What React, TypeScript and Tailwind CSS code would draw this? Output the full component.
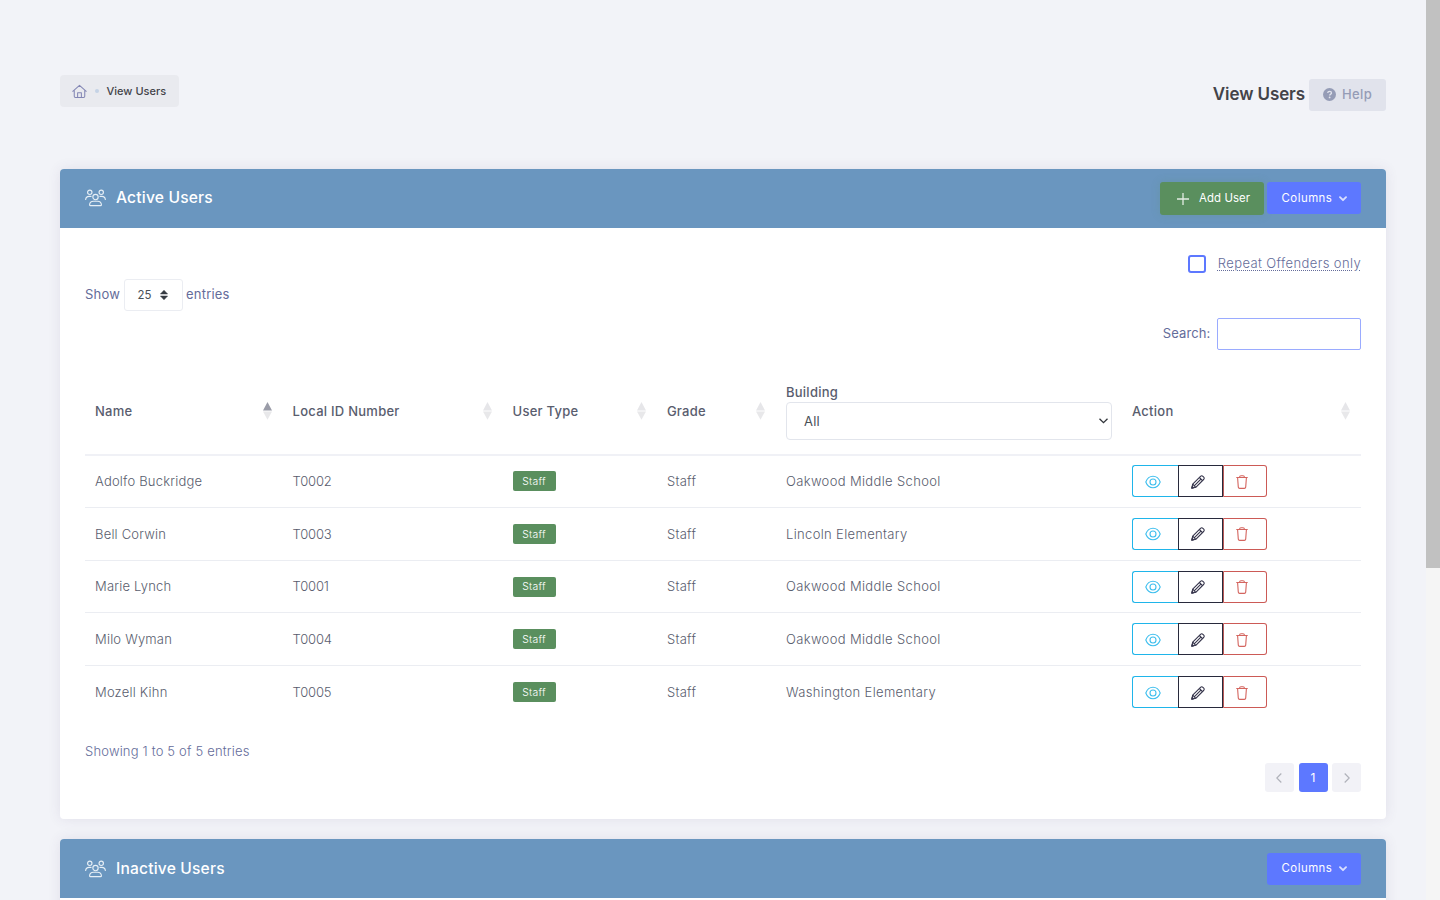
import type { ReactNode } from 'react';

interface User {
  name: string;
  localId: string;
  type: string;
  grade: string;
  building: string;
}

const users: User[] = [
  { name: 'Adolfo Buckridge', localId: 'T0002', type: 'Staff', grade: 'Staff', building: 'Oakwood Middle School' },
  { name: 'Bell Corwin', localId: 'T0003', type: 'Staff', grade: 'Staff', building: 'Lincoln Elementary' },
  { name: 'Marie Lynch', localId: 'T0001', type: 'Staff', grade: 'Staff', building: 'Oakwood Middle School' },
  { name: 'Milo Wyman', localId: 'T0004', type: 'Staff', grade: 'Staff', building: 'Oakwood Middle School' },
  { name: 'Mozell Kihn', localId: 'T0005', type: 'Staff', grade: 'Staff', building: 'Washington Elementary' },
];

const columns = 'grid grid-cols-[197.6px_220px_154.3px_119.1px_346px_239px]';

function HomeIcon() {
  return (
    <svg className="w-[15px] h-[15px]" viewBox="0 0 16 16" fill="none" stroke="#8386b4" strokeWidth="1.1" strokeLinejoin="round" strokeLinecap="round">
      <path d="M.8 7.8 8 1.400l7.200 6.400M2.400 6.700v6.400c0 .8.5 1.300 1.300 1.300h8.600c.8 0 1.300-.5 1.300-1.300V6.700" />
      <path d="M6 14.200V9.300h4v4.900" />
    </svg>
  );
}

function UsersIcon() {
  return (
    <svg className="w-[21px] h-[18px]" viewBox="0 0 22 18" fill="none" stroke="#e6eff6" strokeWidth="1.2" strokeLinecap="round" strokeLinejoin="round">
      <circle cx="5" cy="3" r="2.300" />
      <circle cx="17" cy="3" r="2.300" />
      <circle cx="11" cy="8" r="2.800" />
      <path d="M.7 10.600c.2-2.200 1.600-3.300 3.600-3.300h2M21.300 10.600c-.2-2.200-1.600-3.300-3.600-3.300h-2" />
      <path d="M4.800 16c.2-2.500 1.900-3.600 4-3.600h4.400c2.100 0 3.800 1.100 4 3.600 0 .7-.3 1-1 1H5.800c-.7 0-1-.3-1-1Z" />
    </svg>
  );
}

function HelpIcon() {
  return (
    <svg className="w-[13px] h-[13px]" viewBox="0 0 13 13" fill="none">
      <circle cx="6.500" cy="6.500" r="6.500" fill="#959cb6" />
      <path d="M4.700 5c.1-1 .8-1.600 1.900-1.600s1.900.6 1.900 1.500c0 1.200-1.800 1.200-1.800 2.500" stroke="#e1e3ec" strokeWidth="1.300" />
      <circle cx="6.600" cy="9.400" r=".9" fill="#e1e3ec" />
    </svg>
  );
}

function ChevronDown() {
  return (
    <svg className="mt-px w-2 h-[6px]" viewBox="0 0 8 6" fill="none" stroke="#d9deff" strokeWidth="1.900" strokeLinecap="round" strokeLinejoin="round">
      <path d="m1 1.200 3 3 3-3" />
    </svg>
  );
}

function SortIcon({ active = false }: { active?: boolean }) {
  return (
    <svg className="w-[9px] h-[18px]" viewBox="0 0 9 18">
      <path d="M4.500 0 9 8.500H0Z" fill={active ? '#9a9ca8' : '#e6e6e9'} />
      <path d="M4.500 17.700 9 9.500H0Z" fill="#e8e8ea" />
    </svg>
  );
}

function EyeIcon() {
  return (
    <svg className="w-4 h-[14px]" viewBox="0 0 16 14" fill="none" stroke="#3fbfee" strokeWidth="1.100">
      <path d="M.8 7C2.100 3.500 4.800 1.300 8 1.300S13.900 3.500 15.200 7c-1.300 3.500-4 5.700-7.200 5.700S2.100 10.500.8 7Z" />
      <circle cx="8" cy="7" r="3" />
    </svg>
  );
}

function PencilIcon() {
  return (
    <svg className="w-[14px] h-[14px]" viewBox="0 0 14 14" fill="none" stroke="#34334a" strokeWidth="1.100" strokeLinejoin="round">
      <path d="m.8 13.200.9-4 7.800-7.800c.8-.8 1.700-.8 2.400-.1l.8.800c.7.7.7 1.600-.1 2.400l-7.800 7.800-4 .9Z" />
      <path d="m8.400 2.500 3.100 3.100M1.700 9.200l3.100 3.100M3.200 10.800l6.700-6.700" />
      <path d="m.8 13.200.4-1.700 1.300 1.300Z" fill="#34334a" />
    </svg>
  );
}

function TrashIcon() {
  return (
    <svg className="w-3 h-[14px]" viewBox="0 0 12 14" fill="none" stroke="#d4655f" strokeWidth="1.100" strokeLinecap="round" strokeLinejoin="round">
      <path d="M.7 2.500h10.600M3.500 2.300C3.600 1.300 4 .8 5 .8h2c1 0 1.400.5 1.500 1.500M1.600 2.700l.7 9.400c.1.800.6 1.300 1.300 1.300h4.800c.7 0 1.200-.5 1.300-1.300l.7-9.400" />
    </svg>
  );
}

function ColumnsButton() {
  return (
    <button className="flex h-8 w-[94px] items-center rounded-[3px] bg-[#5d78ff] pl-[14.500px] text-[11.400px] tracking-[0.500px] text-white">
      <span className="w-[57px] pt-px text-left">Columns</span>
      <ChevronDown />
    </button>
  );
}

function PanelHeader({ title, children }: { title: string; children: ReactNode }) {
  return (
    <div className="flex h-[59px] items-center rounded-t-[4px] bg-[#6a96bf] px-[25px]">
      <UsersIcon />
      <h3 className="ml-[10px] flex-1 text-[15.600px] font-medium tracking-[0.180px] text-white">{title}</h3>
      <div className="flex items-center gap-[3px]">{children}</div>
    </div>
  );
}

function HeaderCell({ label, active = false }: { label: string; active?: boolean }) {
  return (
    <div className="flex items-center justify-between pl-[10px] pr-[10.500px]">
      <span className="pt-px">{label}</span>
      <SortIcon active={active} />
    </div>
  );
}

function ActionButtons() {
  return (
    <div className="flex h-8 w-[135px]">
      <button className="flex w-[46px] items-center justify-center rounded-l-[3px] border border-r-0 border-[#1fb5ea] pr-1 pt-px">
        <EyeIcon />
      </button>
      <button className="flex w-[45px] items-center justify-center border border-[#282a3c] pr-1 pt-px">
        <PencilIcon />
      </button>
      <button className="flex w-[44px] items-center justify-center rounded-r-[3px] border border-[#cc5a56] border-l-[#b85a58] pr-[5px] pt-px">
        <TrashIcon />
      </button>
    </div>
  );
}

export default function App() {
  return (
    <div className="flex h-[900px] w-[1440px] overflow-hidden bg-[#f2f3f8] font-['Inter','Noto_Sans',sans-serif] text-[13px] text-[#646c9a]">
      <main className="w-[1426px] pl-[60px] pr-[40px] pt-[75px]">
        <div className="flex h-[93.500px] items-start justify-between">
          <nav className="flex h-8 w-[118.500px] items-center rounded-[4px] bg-[#e9eaef] pl-[11.500px]">
            <HomeIcon />
            <span className="ml-2 h-1 w-1 rounded-full bg-[#c5d3e6]" />
            <span className="ml-2 whitespace-nowrap pt-px text-[11px] font-medium text-[#434349]">View Users</span>
          </nav>
          <div className="mt-[3.500px] flex items-center">
            <h1 className="text-[17px] font-semibold tracking-[-0.100px] text-[#434349]">View Users</h1>
            <button className="ml-1 flex h-8 w-[77px] items-center rounded-[3px] bg-[#e1e3ec] pl-[14px] font-medium text-[#959cb6]">
              <HelpIcon />
              <span className="ml-[6px] tracking-[0.350px]">Help</span>
            </button>
          </div>
        </div>

        <section className="h-[650.500px] rounded-[4px] bg-white shadow-[0_0_13px_rgba(82,63,105,0.100)]">
          <PanelHeader title="Active Users">
            <button className="flex h-[33px] w-[104px] items-center rounded-[3px] bg-[#5a8f5e] pl-[17px] text-[11.400px] tracking-[0.100px] text-white shadow-[0_0_10px_rgba(90,143,94,0.200)]">
              <svg className="mt-px h-3 w-3" viewBox="0 0 12 12" stroke="#e3ede3" strokeWidth="1.300">
                <path d="M6 0v12M0 6h12" />
              </svg>
              <span className="ml-[10px] pt-px">Add User</span>
            </button>
            <ColumnsButton />
          </PanelHeader>

          <div className="px-[25px] pt-[25px]">
            <div className="flex h-[22px] items-center justify-end">
              <span className="h-[18px] w-[18px] rounded-[3px] border-2 border-[#5d78ff]" />
              <span className="ml-3 font-light tracking-[0.380px] underline decoration-dotted decoration-1 underline-offset-2">Repeat Offenders only</span>
            </div>
            <div className="mt-[4px] flex h-8 items-center">
              <span className="tracking-[0.200px]">Show</span>
              <span className="ml-[3.500px] mr-[3.500px] flex h-8 w-[59px] items-center rounded-[3px] border border-[#ebedf2] pl-[13px] text-[11.400px] text-[#495057]">
                <span className="pt-[2px]">25</span>
                <svg className="ml-[9px] mt-px h-[10px] w-2" viewBox="0 0 8 10" fill="#343a40">
                  <path d="M4 .2 7.600 4H.4ZM4 9.800.4 6h7.200Z" stroke="#343a40" strokeWidth=".5" strokeLinejoin="round" />
                </svg>
              </span>
              <span className="tracking-[0.200px]">entries</span>
            </div>
            <div className="mt-[7px] flex h-8 items-center justify-end">
              <label htmlFor="search" className="mr-[6px] tracking-[0.130px]">Search:</label>
              <input id="search" className="h-8 w-[144.500px] rounded-[2px] border border-[#9aabff] outline-none" />
            </div>

            <div className="mt-[19px]">
              <div className={`${columns} h-[87.100px] border-b-2 border-[#f0f1f6] font-medium tracking-[0.250px] text-[#595d6e]`}>
                <HeaderCell label="Name" active />
                <HeaderCell label="Local ID Number" />
                <HeaderCell label="User Type" />
                <HeaderCell label="Grade" />
                <div className="px-[10px] pt-[14px]">
                  <div className="h-[19px] leading-[19px]">Building</div>
                  <div className="flex h-[38.500px] w-[326.500px] items-center justify-between rounded-[4px] border border-[#e2e5ec] pl-[17px] pr-[3px] font-normal text-[#495057]">
                    <span className="pt-px">All</span>
                    <svg className="h-[6px] w-[9px]" viewBox="0 0 9 6" fill="none" stroke="#30343a" strokeWidth="1.300">
                      <path d="m.5.7 4 4 4-4" />
                    </svg>
                  </div>
                </div>
                <HeaderCell label="Action" />
              </div>

              {users.map(user => (
                <div key={user.localId} className={`${columns} h-[52.600px] items-center border-b border-[#ebedf2] font-light text-[#595d6e] last:border-b-0 *:pl-[10px]`}>
                  <div className="pt-px tracking-[0.200px]">{user.name}</div>
                  <div className="pt-px tracking-[-0.200px]">{user.localId}</div>
                  <div>
                    <span className="flex h-5 w-[43px] items-center justify-center rounded-[2px] bg-[#5a8f5e] pt-px text-[10.400px] tracking-[0.300px] text-white">{user.type}</span>
                  </div>
                  <div className="pt-px tracking-[0.300px]">{user.grade}</div>
                  <div className="pt-px tracking-[0.350px]">{user.building}</div>
                  <div>
                    <ActionButtons />
                  </div>
                </div>
              ))}
            </div>

            <div className="mt-[22.500px] h-[21px] font-light leading-[21px] tracking-[0.180px]">Showing 1 to 5 of 5 entries</div>
            <div className="mt-px flex justify-end gap-[4.500px]">
              <button className="flex h-[29px] w-[29px] items-center justify-center rounded-[3px] bg-[#f2f2f7] pr-[2px] pt-px">
                <svg className="h-[10px] w-[6px]" viewBox="0 0 6 10" fill="none" stroke="#b0b2ba" strokeWidth="1.200">
                  <path d="M5.300.5.800 5l4.500 4.500" />
                </svg>
              </button>
              <button className="h-[29px] w-[29px] rounded-[3px] bg-[#5d78ff] text-[12px] text-white">1</button>
              <button className="flex h-[29px] w-[29px] items-center justify-center rounded-[3px] bg-[#f2f2f7] pl-px pt-px">
                <svg className="h-[10px] w-[6px]" viewBox="0 0 6 10" fill="none" stroke="#b0b2ba" strokeWidth="1.200">
                  <path d="M.7.500 5.200 5 .7 9.500" />
                </svg>
              </button>
            </div>
          </div>
        </section>

        <section className="mt-5 h-[200px] rounded-[4px] bg-white shadow-[0_0_13px_rgba(82,63,105,0.100)]">
          <PanelHeader title="Inactive Users">
            <ColumnsButton />
          </PanelHeader>
        </section>
      </main>
      <div className="h-full w-[14px] bg-[#f5f5f5]">
        <div className="h-[568px] bg-[#c1c1c1]" />
      </div>
    </div>
  );
}
